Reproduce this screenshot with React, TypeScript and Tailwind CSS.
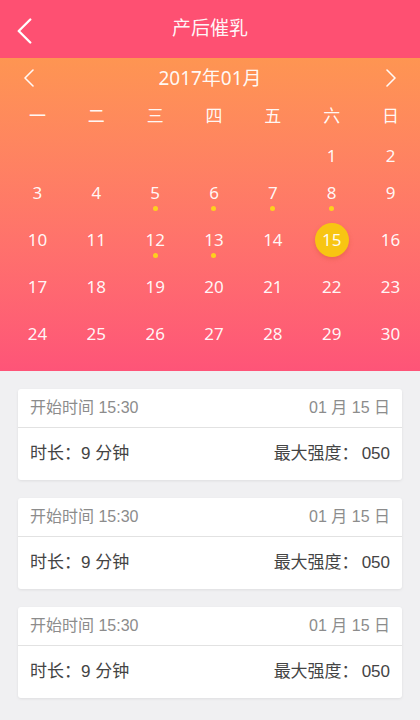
const weekdays = ['一', '二', '三', '四', '五', '六', '日']

type Day = { n: number | null; dot?: boolean; selected?: boolean }

const dotted = [5, 6, 7, 8, 12, 13]

function buildRows(): Day[][] {
  const cells: Day[] = [null, null, null, null, null].map(() => ({ n: null }))
  for (let i = 1; i <= 30; i++) {
    cells.push({ n: i, dot: dotted.includes(i), selected: i === 15 })
  }
  const rows: Day[][] = []
  for (let i = 0; i < cells.length; i += 7) rows.push(cells.slice(i, i + 7))
  return rows
}

function Chevron({ dir, className }: { dir: 'left' | 'right'; className?: string }) {
  return (
    <svg viewBox="0 0 10 18" className={className} fill="none" stroke="currentColor" strokeWidth="1.6" strokeLinecap="round" strokeLinejoin="round">
      {dir === 'left' ? <path d="M9 1 L1 9 L9 17" /> : <path d="M1 1 L9 9 L1 17" />}
    </svg>
  )
}

function Record() {
  return (
    <div className="bg-white rounded-[3px] shadow-[0_1px_3px_rgba(0,0,0,0.08)]">
      <div className="h-[39px] px-[12px] flex items-center justify-between text-[16px] text-[#8c8c8c] border-b border-[#e2e2e2]">
        <span>开始时间 15:30</span>
        <span>01 月 15 日</span>
      </div>
      <div className="h-[52px] px-[12px] flex items-center justify-between text-[17px] text-[#444]">
        <span>时长：9 分钟</span>
        <span>最大强度：<span className="ml-[3px]">050</span></span>
      </div>
    </div>
  )
}

export default function App() {
  const rows = buildRows()
  return (
    <div className="w-[420px] h-[720px] overflow-hidden bg-[#f0f0f2] font-['Liberation_Sans','Noto_Sans_CJK_SC',sans-serif]">
      {/* title bar */}
      <div className="h-[58px] bg-[#fe5072] relative flex items-center justify-center text-white">
        <Chevron dir="left" className="absolute left-[17px] top-[18px] w-[15px] h-[26px]" />
        <span className="text-[19px] text-white/95">产后催乳</span>
      </div>

      {/* calendar */}
      <div className="bg-linear-to-b from-[#fe9552] to-[#fe5478] pb-[5px] text-white/95 font-['Noto_Sans','Noto_Sans_CJK_SC',sans-serif]">
        <div className="h-[40px] flex items-center justify-between px-[24px]">
          <Chevron dir="left" className="w-[10px] h-[18px]" />
          <span className="text-[19px]">2017年01月</span>
          <Chevron dir="right" className="w-[10px] h-[18px]" />
        </div>
        <div className="h-[36px] grid grid-cols-7 pl-2 items-center text-[17px]">
          {weekdays.map(w => (
            <div key={w} className="text-center">{w}</div>
          ))}
        </div>
        <div className="mt-[7px] pl-2">
          {rows.map((row, ri) => (
            <div key={ri} className={`grid grid-cols-7 ${ri === 0 ? 'h-[37px]' : 'h-[47px]'}`}>
              {row.map((d, ci) => (
                <div key={ci} className="flex flex-col items-center">
                  <div className="h-[30px] flex items-center justify-center text-[17px]">
                    {d.n !== null && (
                      d.selected ? (
                        <span className="w-[34px] h-[34px] rounded-full bg-[#f8c512] shadow-[0_2px_4px_rgba(200,80,40,0.35)] flex items-center justify-center">{d.n}</span>
                      ) : (
                        <span>{d.n}</span>
                      )
                    )}
                  </div>
                  {d.dot && <span className="w-[5px] h-[5px] rounded-full bg-[#fdd01e] mt-[-2px]" />}
                </div>
              ))}
            </div>
          ))}
        </div>
      </div>

      {/* records */}
      <div className="px-[18px] pt-[18px] flex flex-col gap-[18px]">
        <Record />
        <Record />
        <Record />
      </div>
    </div>
  )
}
